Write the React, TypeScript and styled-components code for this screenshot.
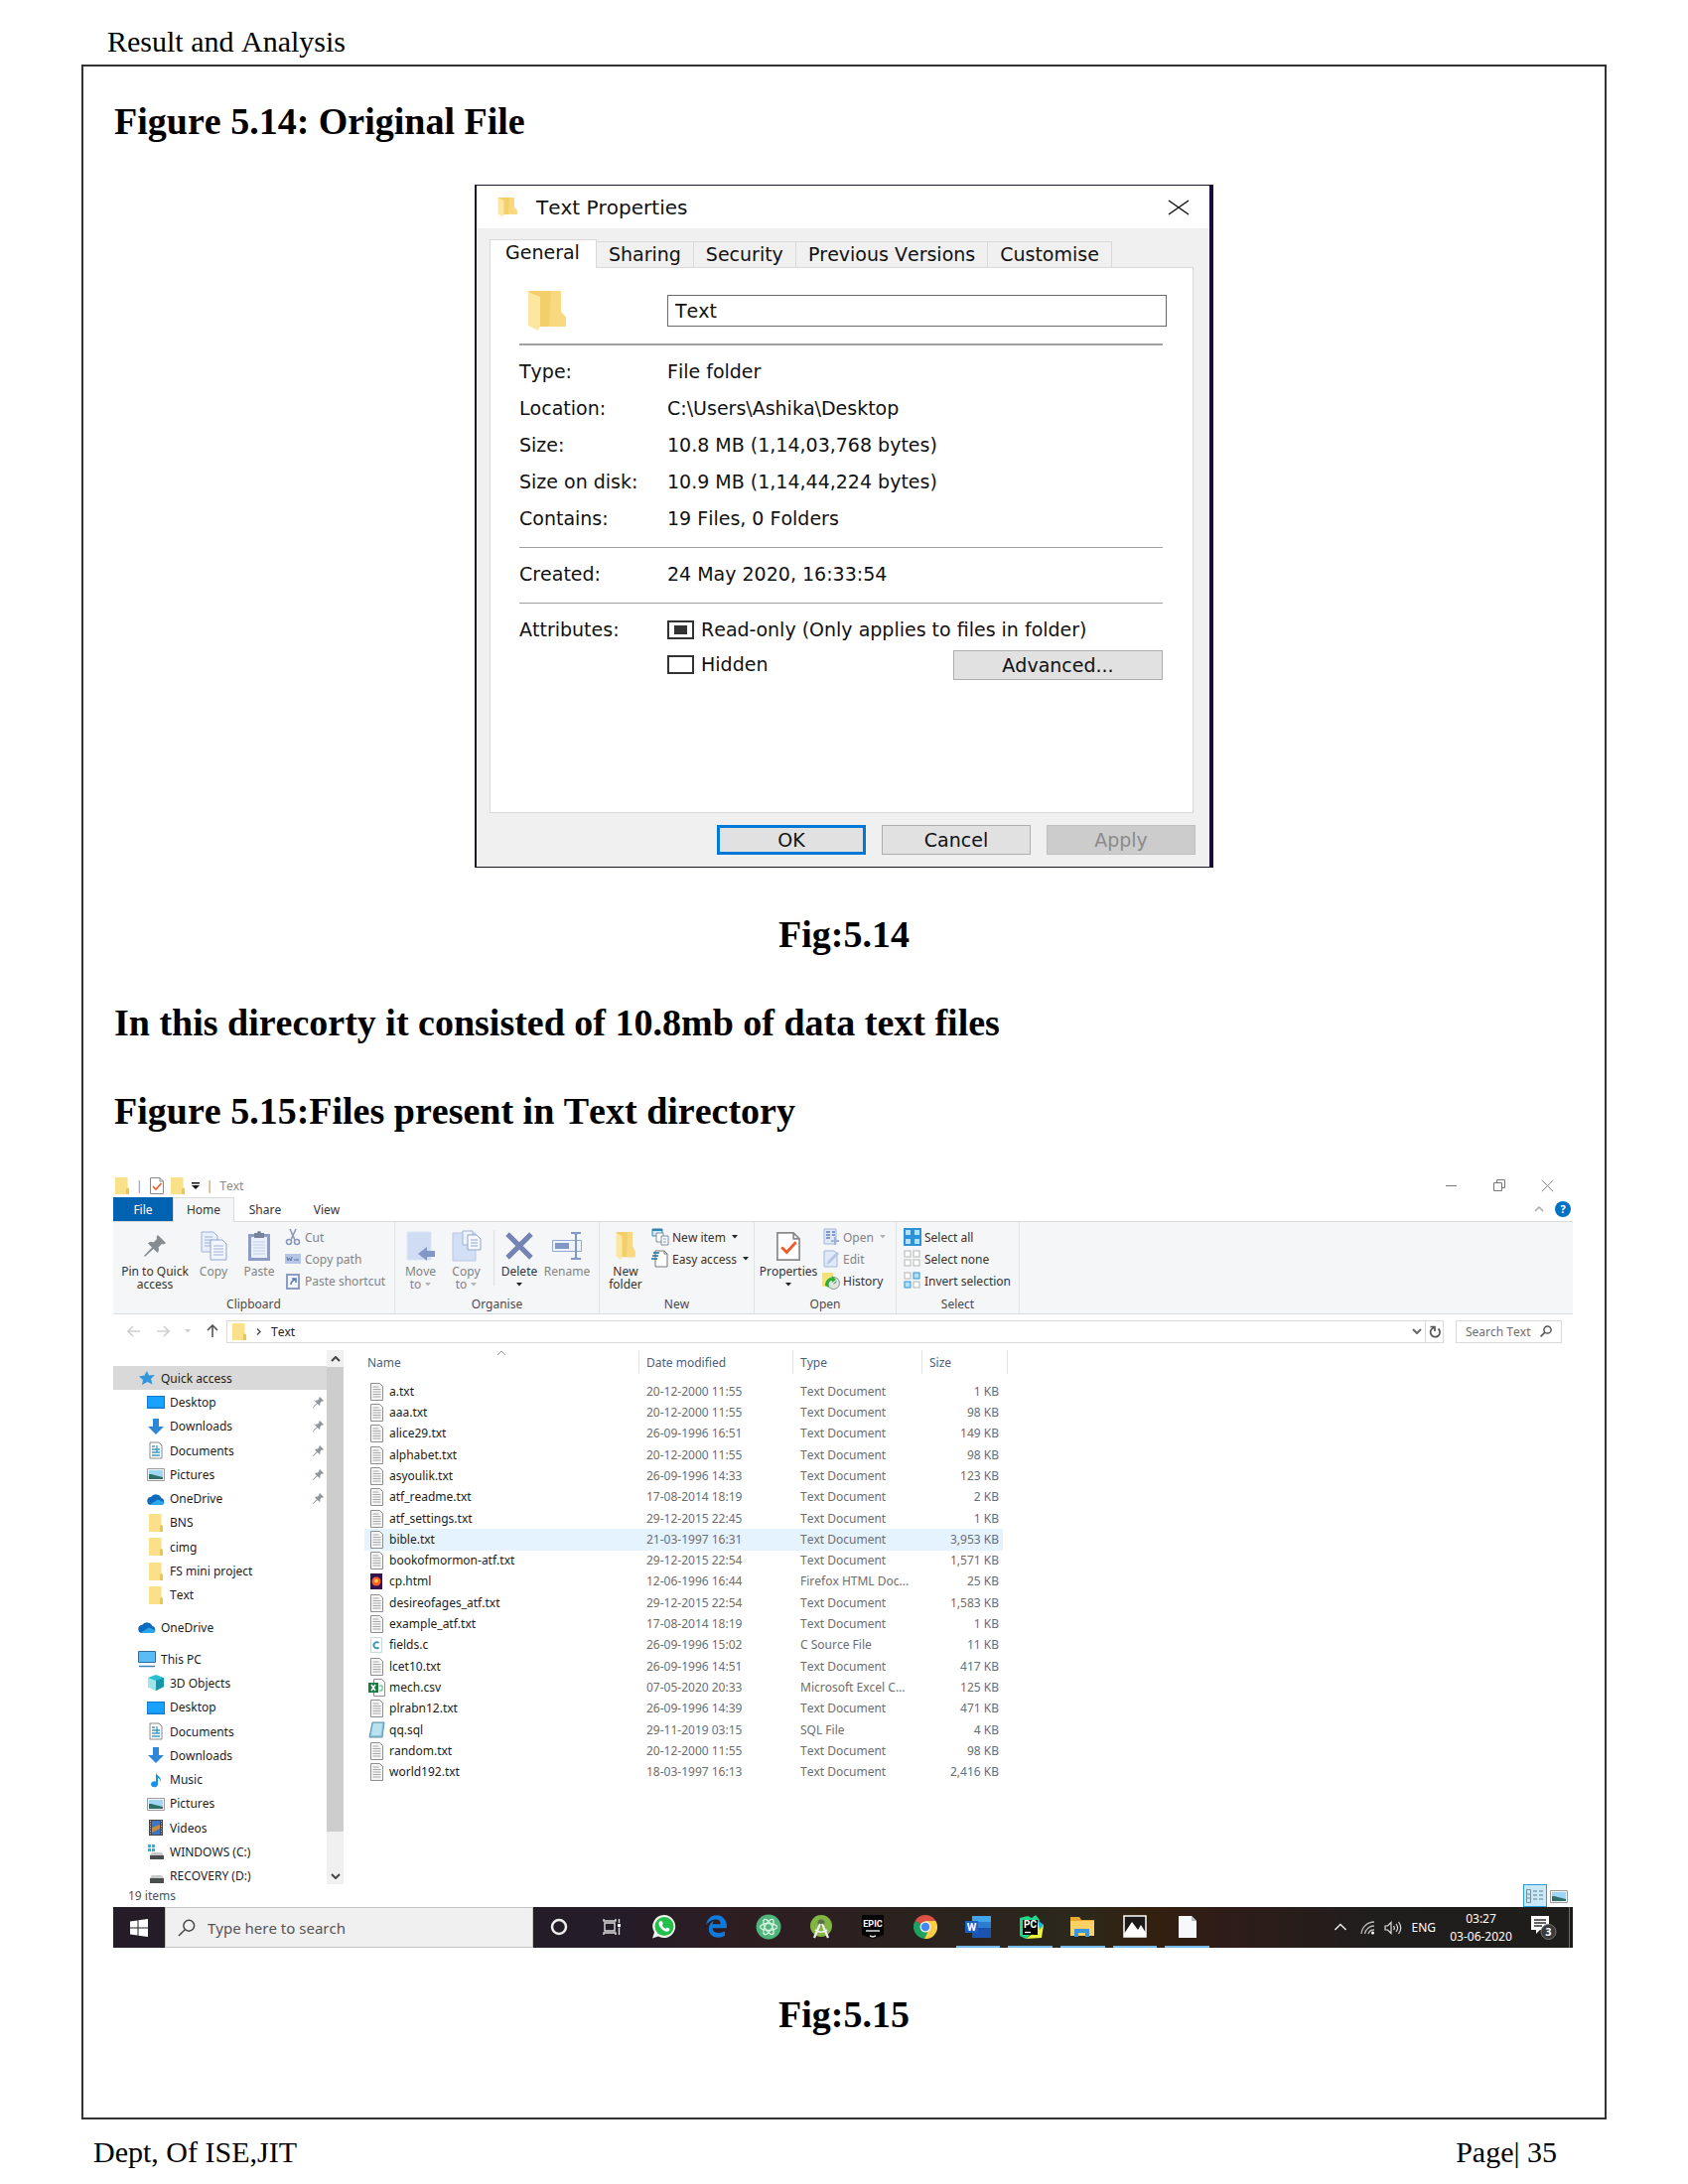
import React, { useEffect, useRef } from "react";
import styled, { createGlobalStyle, css } from "styled-components";
import { FaWhatsapp } from "react-icons/fa";
import { FaEdgeLegacy } from "react-icons/fa6";

const serif = `"Liberation Serif", "Times New Roman", serif`;
const shell = `"DejaVu Sans", Verdana, sans-serif`;
const segoe = `"Noto Sans", "Open Sans", "Segoe UI", sans-serif`;

const Global = createGlobalStyle`
  *, *::before, *::after { box-sizing: border-box; }
  body { margin: 0; background: #fff; color: #000; }
  button, input { font: inherit; color: inherit; margin: 0; }
  button { border: 0; background: none; padding: 0; }
  svg { display: block; flex: none; }
`;

/* ---------- document page ---------- */

const Page = styled.div`
  font-family: ${serif};
  font-kerning: none;
`;

const RunningHead = styled.header`
  padding: 25px 108px 6px;
`;

const RunningFoot = styled.footer`
  display: flex;
  justify-content: space-between;
  padding: 16px 132px 15px 94px;
`;

const RunningText = styled.div`
  font-size: 30px;
  line-height: 34px;
`;

const Frame = styled.main`
  margin: 0 82px;
  padding: 33px 30px 82px;
  border: 2px solid #333;
`;

const Heading = styled.h2<{ $center?: boolean }>`
  margin: 0 0 45px;
  padding-left: ${(p) => (p.$center ? 0 : 1)}px;
  font-size: 38px;
  line-height: 44px;
  font-weight: 700;
  text-align: ${(p) => (p.$center ? "center" : "left")};
  &:last-child { margin-bottom: 0; }
`;

/* ---------- properties dialog ---------- */

const Dialog = styled.section`
  width: 744px;
  max-width: 100%;
  margin: -3px auto 45px;
  border: solid #1a1526;
  border-width: 1px 4px 1px 2px;
  border-right-color: #1c0a3c;
  background: #f0f0f0;
  font-family: ${shell};
  font-size: 19px;
  color: #111;
`;

const DialogTitle = styled.div`
  display: flex;
  align-items: center;
  gap: 19px;
  height: 43px;
  padding: 0 20px 0 21px;
  background: #fff;
  font-size: 20px;
  & > button { margin-left: auto; }
`;

const DialogBody = styled.div`
  padding: 11px 14px 12px 13px;
`;

const SheetTabs = styled.div`
  display: flex;
  align-items: flex-end;
  height: 28px;
`;

const SheetTab = styled.button<{ $on?: boolean }>`
  height: 26px;
  padding: 0 12px;
  border: 1px solid #d9d9d9;
  border-width: 1px 1px 0 0;
  line-height: 25px;
  white-space: nowrap;
  ${(p) =>
    p.$on &&
    css`
      height: 29px;
      margin-bottom: -1px;
      padding: 0 16px 3px 15px;
      border-left-width: 1px;
      background: #fff;
    `}
`;

const Sheet = styled.div`
  min-height: 550px;
  margin-right: 2px;
  padding: 23px 26px 0 29px;
  border: 1px solid #d9d9d9;
  background: #fff;
`;

const NameRow = styled.div`
  display: grid;
  grid-template-columns: 149px 1fr;
  align-items: center;
  svg { margin-left: 8px; }
`;

const NameInput = styled.input`
  height: 32px;
  width: 100%;
  padding: 0 7px;
  border: 1px solid #6a6a6a;
  background: #fff;
`;

const Rule = styled.hr<{ $thick?: boolean }>`
  height: ${(p) => (p.$thick ? 2 : 1)}px;
  margin: ${(p) => (p.$thick ? 13 : 10)}px 4px 8px 0;
  border: 0;
  background: #a0a0a0;
`;

const Facts = styled.dl`
  display: grid;
  grid-template-columns: 149px 1fr;
  margin: 0;
  line-height: 37px;
  white-space: nowrap;
  dd { margin: 0; }
`;

const Attributes = styled.div`
  display: grid;
  grid-template-columns: 149px 1fr auto;
  margin-right: 4px;
  line-height: 37px;
  white-space: nowrap;
`;

const Check = styled.label<{ $wide?: boolean }>`
  display: flex;
  align-items: center;
  gap: 7px;
  grid-column: ${(p) => (p.$wide ? "2 / 4" : "2")};
  height: ${(p) => (p.$wide ? 37 : 32)}px;
  input {
    appearance: none;
    width: 27px;
    height: 19px;
    padding: 3px 5px;
    border: 2px solid #333;
    background: #fff;
  }
  input:indeterminate {
    background: #333 content-box;
  }
`;

const PushButton = styled.button<{ $primary?: boolean; $wide?: boolean }>`
  width: ${(p) => (p.$wide ? 211 : 150)}px;
  height: 30px;
  border: ${(p) => (p.$primary ? "3px solid #0078d7" : "1px solid #adadad")};
  background: #e1e1e1;
  line-height: 24px;
  align-self: end;
  &:disabled { background: #ccc; border-color: #bfbfbf; color: #8b8b8b; }
`;

const Actions = styled.div`
  display: flex;
  justify-content: flex-end;
  gap: 16px;
  padding-top: 12px;
`;

/* ---------- explorer ---------- */

const Explorer = styled.section`
  margin: -4px 2px 45px 0;
  background: #fff;
  font-family: ${segoe};
  font-size: 12px;
  color: #222;
`;

const TitleBar = styled.div`
  display: flex;
  align-items: center;
  height: 24px;
  padding: 0 19px 0 2px;
  color: #8a8a8a;
`;

const QuickTools = styled.div`
  display: flex;
  align-items: center;
  gap: 7px;
`;

const WindowButtons = styled.div`
  display: flex;
  gap: 36px;
  margin-left: auto;
`;

const RibbonTabs = styled.nav`
  display: flex;
  height: 24px;
`;

const RibbonTab = styled.button<{ $kind?: "file" | "on" }>`
  width: 62px;
  padding-bottom: 1px;
  border: 1px solid transparent;
  border-bottom: 0;
  color: #333;
  ${(p) =>
    p.$kind === "file" &&
    css`
      width: 60px;
      background: #0063b1;
      color: #fff;
    `}
  ${(p) =>
    p.$kind === "on" &&
    css`
      margin-bottom: -1px;
      padding-bottom: 2px;
      background: #f5f6f7;
      border-color: #dadbdc;
    `}
`;

const RibbonExtras = styled.div`
  display: flex;
  align-items: center;
  gap: 11px;
  margin-left: auto;
  padding-right: 2px;
`;

const Help = styled.button`
  width: 16px;
  height: 16px;
  border-radius: 50%;
  background: #0072c6;
  color: #fff;
  font-size: 11px;
  font-weight: 700;
  line-height: 16px;
`;

const Ribbon = styled.div`
  display: flex;
  height: 94px;
  border: solid #dadbdc;
  border-width: 1px 0;
  background: #f5f6f7;
`;

const Group = styled.div<{ $width: number }>`
  display: flex;
  flex-direction: column;
  width: ${(p) => p.$width}px;
  border-right: 1px solid #e2e3e4;
`;

const GroupItems = styled.div<{ $pad?: number }>`
  display: flex;
  flex: 1;
  padding-left: ${(p) => p.$pad ?? 0}px;
`;

const GroupName = styled.div`
  padding-bottom: 1px;
  line-height: 16px;
  text-align: center;
  color: #4a4a4a;
`;

const Big = styled.button<{ $width: number; $off?: boolean }>`
  display: flex;
  flex-direction: column;
  align-items: center;
  gap: 3px;
  width: ${(p) => p.$width}px;
  padding-top: 8px;
  line-height: 13px;
  white-space: nowrap;
  color: ${(p) => (p.$off ? "#838383" : "#333")};
`;

const IconBox = styled.span`
  display: flex;
  align-items: center;
  justify-content: center;
  height: 32px;
`;

const Caption = styled.span`
  display: flex;
  flex-direction: column;
  align-items: center;
`;

const WithArrow = styled.span`
  display: flex;
  align-items: center;
  gap: 4px;
  min-height: 13px;
`;

const SmallColumn = styled.div`
  display: flex;
  flex-direction: column;
  padding-top: 4px;
`;

const Small = styled.button<{ $off?: boolean }>`
  display: flex;
  align-items: center;
  gap: 3px;
  height: 22px;
  white-space: nowrap;
  color: ${(p) => (p.$off ? "#838383" : "#333")};
  & > svg:last-child:not(:first-child) { margin-left: 3px; }
`;

const Split = styled.span`
  width: 1px;
  height: 56px;
  margin: 8px 0 0 7px;
  background: #dcdddf;
`;

const AddressRow = styled.div`
  display: flex;
  align-items: center;
  height: 36px;
  padding: 0 11px 2px 14px;
`;

const NavButtons = styled.div`
  display: flex;
  align-items: center;
  gap: 15px;
  width: 100px;
`;

const AddressBox = styled.div`
  display: flex;
  align-items: center;
  gap: 10px;
  flex: 1;
  height: 23px;
  padding-left: 5px;
  border: 1px solid #d9d9d9;
`;

const Crumb = styled.button`
  margin-right: auto;
`;

const Refresh = styled.button`
  display: flex;
  align-items: center;
  justify-content: center;
  width: 18px;
  height: 21px;
  margin-left: -7px;
  border-left: 1px solid #d9d9d9;
`;

const SearchBox = styled.label`
  display: flex;
  align-items: center;
  width: 107px;
  height: 23px;
  margin-left: 12px;
  padding: 0 9px;
  border: 1px solid #d9d9d9;
  input {
    flex: 1;
    min-width: 0;
    padding: 0;
    border: 0;
    background: none;
  }
  input::placeholder { color: #6d6d6d; opacity: 1; }
`;

const Body = styled.div`
  display: flex;
  align-items: stretch;
`;

const Tree = styled.nav`
  display: flex;
  flex-direction: column;
  gap: 8px;
  width: 215px;
  height: 538px;
  padding-top: 16px;
  overflow: hidden;
  color: #1c1c1c;
`;

const Branch = styled.div<{ $height: number }>`
  display: grid;
  grid-auto-rows: 1fr;
  flex: none;
  height: ${(p) => p.$height}px;
`;

const Node = styled.a<{ $child?: boolean; $on?: boolean }>`
  display: flex;
  align-items: center;
  gap: 5px;
  padding: 0 3px 0 ${(p) => (p.$child ? 34 : 25)}px;
  color: inherit;
  text-decoration: none;
  background: ${(p) => (p.$on ? "#d9d9d9" : "none")};
  & > svg:last-child:not(:first-child) { margin-left: auto; }
`;

const ScrollBar = styled.div`
  display: flex;
  flex-direction: column;
  width: 17px;
  background: #f0f0f0;
  button { display: flex; align-items: center; justify-content: center; height: 17px; }
`;

const Thumb = styled.div`
  height: 468px;
  margin-bottom: auto;
  background: #cdcdcd;
`;

const Files = styled.table`
  width: 648px;
  height: 436px;
  margin-left: 21px;
  border-collapse: separate;
  border-spacing: 0;
  table-layout: fixed;
  line-height: 16px;
  color: #6d6d6d;
  th, td {
    padding: 0 0 0 7px;
    font-weight: 400;
    text-align: left;
    white-space: nowrap;
    overflow: hidden;
    text-overflow: ellipsis;
  }
  td:first-child { padding-left: 4px; color: #1c1c1c; }
  td:last-child {
    padding: 0 4px 0 0;
    border-right: 5px solid transparent;
    background-clip: padding-box;
    text-align: right;
  }
`;

const Column = styled.col<{ $width?: number }>`
  width: ${(p) => (p.$width ? `${p.$width}px` : "auto")};
`;

const HeadRow = styled.tr`
  height: 31px;
  color: #4c607a;
  th { padding: 0 0 7px; }
`;

const HeadCell = styled.span<{ $first?: boolean }>`
  display: flex;
  align-items: center;
  gap: 96px;
  height: 24px;
  padding: 2px 0 0 ${(p) => (p.$first ? 3 : 7)}px;
  border-right: 1px solid #e2e2e2;
  svg { margin-bottom: 21px; }
`;

const FileRow = styled.tr<{ $on?: boolean }>`
  td { background-color: ${(p) => (p.$on ? "#e5f3ff" : "transparent")}; }
`;

const FileName = styled.span`
  display: flex;
  align-items: center;
  gap: 3px;
`;

const Status = styled.div`
  display: flex;
  align-items: center;
  height: 23px;
  padding: 0 5px 0 15px;
  color: #3c5670;
`;

const Views = styled.div`
  display: flex;
  align-items: center;
  gap: 3px;
  margin-left: auto;
`;

const ViewOn = styled.button`
  display: flex;
  align-items: center;
  justify-content: center;
  width: 24px;
  height: 23px;
  border: 1px solid #26a0da;
  background: #cbe8f6;
`;

/* ---------- taskbar ---------- */

const Taskbar = styled.div`
  display: flex;
  height: 41px;
  color: #fff;
  background: linear-gradient(90deg, #241c27 0%, #241c27 35%, #2e1d22 42%, #2a221e 55%, #2c281c 66%, #33200f 71%, #2f1c18 76%, #201e1d 86%, #1f1d1a 100%);
`;

const Start = styled.button`
  display: flex;
  align-items: center;
  justify-content: center;
  width: 52px;
`;

const TaskSearch = styled.label`
  display: flex;
  align-items: center;
  gap: 12px;
  width: 371px;
  padding: 0 12px;
  border: 1px solid #c4c4c4;
  background: #f0f0f0;
  font-size: 15px;
  color: #444;
  input {
    flex: 1;
    min-width: 0;
    padding: 0;
    border: 0;
    background: none;
  }
  input::placeholder { color: #555; opacity: 1; }
`;

const Apps = styled.div`
  display: grid;
  grid-template-columns: repeat(13, 1fr);
  width: 685px;
`;

const AppButton = styled.button<{ $open?: boolean }>`
  display: flex;
  align-items: center;
  justify-content: center;
  margin: 0 4px;
  border: solid ${(p) => (p.$open ? "#76b9ed" : "transparent")};
  border-width: 0 0 2px;
`;

const Tray = styled.div`
  display: flex;
  align-items: center;
  margin-left: auto;
  padding-right: 3px;
`;

const TrayIcons = styled.div`
  display: flex;
  align-items: center;
  gap: 9px;
  & > :first-child { margin-right: 4px; }
`;

const Clock = styled.time`
  width: 63px;
  margin: 0 19px 0 14px;
  line-height: 18px;
  text-align: center;
  white-space: nowrap;
`;

const DesktopEdge = styled.span`
  width: 1px;
  align-self: stretch;
  margin-left: 11px;
  background: #6b6b6b;
`;

/* ---------- icons ---------- */

const Folder = ({ w = 14, h = 17 }: { w?: number; h?: number }) => (
  <svg width={w} height={h} viewBox="0 0 14 17" preserveAspectRatio="none">
    <path d="M0 0h12.500v10.500l1.500 1V17H0z" fill="#fbe08a" />
    <path d="M12.500 10.500l1.500 1V17h-3v-5.500z" fill="#efc552" />
  </svg>
);

const OpenFolder = ({ w, h }: { w: number; h: number }) => (
  <svg width={w} height={h} viewBox="0 0 40 40" preserveAspectRatio="none">
    <path d="M1 0h33v21l5 6v9H12z" fill="#f3cf6c" />
    <path d="M24 0h10v21l5 6v9H22z" fill="#f8d97f" />
    <path d="M1 1l12 5v29l-2 5L1 35z" fill="#fde7a0" />
  </svg>
);

const Cross = ({ s, c, w = 1 }: { s: number; c: string; w?: number }) => (
  <svg width={s} height={s} viewBox="0 0 16 16" preserveAspectRatio="none">
    <path d="M1 1l14 14M15 1L1 15" stroke={c} strokeWidth={w} fill="none" />
  </svg>
);

const Arrow = ({ c = "#222" }: { c?: string }) => (
  <svg width="6" height="4" viewBox="0 0 6 4"><path d="M0 0h6L3 3.500z" fill={c} /></svg>
);

const Chevron = ({ up, c = "#555", w = 2, s = 10 }: { up?: boolean; c?: string; w?: number; s?: number }) => (
  <svg width={s} height={s * 0.6} viewBox="0 0 10 6">
    <path d={up ? "M1 5l4-4 4 4" : "M1 1l4 4 4-4"} stroke={c} strokeWidth={w} fill="none" />
  </svg>
);

const SheetIcon = ({ children, w = 14, h = 17 }: { children?: React.ReactNode; w?: number; h?: number }) => (
  <svg width={w} height={h} viewBox="0 0 14 17">
    <path d="M.5.500h9.500l3.500 3.500v12.500H.5z" fill="#fff" stroke="#8a8a8a" />
    <path d="M10 .5V4h3.500" fill="none" stroke="#8a8a8a" />
    {children}
  </svg>
);

const CheckSheet = ({ w, h }: { w?: number; h?: number }) => (
  <SheetIcon w={w} h={h}><path d="M3 9l3 3 5.500-6" fill="none" stroke="#f05a22" strokeWidth="1.600" /></SheetIcon>
);

const Pin = ({ s, c = "#8c969c" }: { s: number; c?: string }) => (
  <svg width={s} height={s} viewBox="0 0 22 22">
    <path d="M14 0l8 8-2 1.500-2-.5-3.500 3.500c.8 2 .5 4-.8 5.500L9.500 14 1 22l-1-1 8-8.500L4 8.500C5.500 7 7.500 6.700 9.500 7.500L13 4l-.5-2z" fill={c} />
  </svg>
);

const CopyIcon = () => (
  <svg width="27" height="30" viewBox="0 0 27 30">
    <path d="M1 1h12l4 4v16H1z" fill="#e9effa" stroke="#9fb2d8" />
    <path d="M4 6h8M4 9h8M4 12h6M4 15h6" stroke="#9fb2d8" />
    <path d="M10 9h12l4 4v16H10z" fill="#f2f6fd" stroke="#8fa4cf" />
    <path d="M13 15h10M13 18h10M13 21h10M13 24h10" stroke="#9fb2d8" />
  </svg>
);

const PasteIcon = () => (
  <svg width="24" height="31" viewBox="0 0 24 31">
    <path d="M1 3h22v27H1z" fill="#8d9cc4" />
    <path d="M4 6h16v21H4z" fill="#eaf0fb" />
    <path d="M7 2h3a2 2 0 014 0h3v5H7z" fill="#77839f" />
    <path d="M6 11h12M6 14h12M6 17h12M6 20h12M6 23h12" stroke="#c3cfe8" />
  </svg>
);

const CutIcon = () => (
  <svg width="18" height="18" viewBox="0 0 18 18" fill="none" stroke="#8a9ab8" strokeWidth="1.600">
    <path d="M6 1l5 11M12 1L7 12" /><circle cx="5" cy="14" r="2.500" /><circle cx="13" cy="14" r="2.500" />
  </svg>
);

const PathIcon = () => (
  <svg width="18" height="10" viewBox="0 0 18 10">
    <path d="M1 0h16v10H1z" fill="#b5c5e6" /><path d="M3 3l1 4 1.500-3L7 7l1-4M10 6h5" stroke="#5d76a8" fill="none" />
  </svg>
);

const ShortcutIcon = () => (
  <svg width="18" height="17" viewBox="0 0 18 17">
    <path d="M2 1h14v16H2z" fill="#8d9cc4" /><path d="M4 3h10v12H4z" fill="#f2f6fd" />
    <path d="M7 12c0-3 1-4 4-5M8 6h4v4" stroke="#5a78b4" strokeWidth="1.500" fill="none" />
  </svg>
);

const MoveIcon = () => (
  <svg width="30" height="30" viewBox="0 0 30 30">
    <path d="M1 1h24v28H1z" fill="#cfdcf3" stroke="#dbe5f6" /><path d="M29 20v6h-8v4l-9-7 9-7v4z" fill="#8197c6" />
  </svg>
);

const CopyToIcon = () => (
  <svg width="30" height="32" viewBox="0 0 30 32">
    <path d="M1 3h23v28H1z" fill="#d3dff4" stroke="#b9c9e8" />
    <path d="M11 1h10v14H11z" fill="#edf2fb" stroke="#9fb2d8" />
    <path d="M16 5h9l4 4v11H16z" fill="#f5f8fe" stroke="#8fa4cf" />
    <path d="M19 10h7M19 13h7M19 16h7" stroke="#8fa4cf" />
  </svg>
);

const DeleteIcon = () => (
  <svg width="28" height="28" viewBox="0 0 27 27"><path d="M2 2l23 23M25 2L2 25" stroke="#7485b4" strokeWidth="5" /></svg>
);

const RenameIcon = () => (
  <svg width="30" height="28" viewBox="0 0 30 28">
    <path d="M.5 8.500h29v11H.5z" fill="#edf2fb" stroke="#93a7d2" /><path d="M3 11h14v6H3z" fill="#8197c6" />
    <path d="M19 1h4l1 2 1-2h4M24 2v24M19 27h4l1-2 1 2h4" stroke="#8197c6" strokeWidth="2" fill="none" />
  </svg>
);

const NewItemIcon = () => (
  <svg width="18" height="18" viewBox="0 0 18 18">
    <path d="M1 1h10v7H1z" fill="#d5ecf8" stroke="#2f86b0" /><path d="M1 2h10" stroke="#2f86b0" strokeWidth="2" />
    <path d="M5 5h7v9H5z" fill="#fff" stroke="#7d8ea0" /><path d="M10 8h7v9h-7z" fill="#fff" stroke="#7d8ea0" />
    <path d="M12 11h3M12 14h3" stroke="#7d9ec0" />
  </svg>
);

const EasyIcon = () => (
  <svg width="18" height="18" viewBox="0 0 18 18">
    <path d="M4 1h9l3 3v13H4z" fill="#fff" stroke="#777" /><path d="M13 1v3h3" stroke="#777" fill="none" />
    <path d="M0 9h6M1 6h6M2 3h6" stroke="#1d6fa0" strokeWidth="1.500" />
  </svg>
);

const OpenIcon = () => (
  <svg width="18" height="18" viewBox="0 0 18 18">
    <path d="M2 1h12v15H2z" fill="#dfe8f7" stroke="#a5b6d8" /><path d="M4 4h4M4 7h4M4 10h4M10 4h3M10 7h3" stroke="#8197c6" strokeWidth="2" />
    <path d="M13 9v8M9 13h8" stroke="#9fb2d8" strokeWidth="2" />
  </svg>
);

const EditIcon = () => (
  <svg width="18" height="18" viewBox="0 0 18 18">
    <path d="M2 1h10l3 3v13H2z" fill="#dfe9f8" stroke="#a5b6d8" /><path d="M4 15l2-4 9-9 2 2-9 9z" fill="#b5c5e6" />
  </svg>
);

const HistoryIcon = () => (
  <svg width="18" height="18" viewBox="0 0 18 18">
    <path d="M0 1h11v14H0z" fill="#f3e27a" /><circle cx="11.500" cy="11.500" r="6" fill="#dfe5e0" stroke="#8b948d" />
    <path d="M3 14c0-5 3-8 7-8v-2l4 4-4 3V9c-3 0-4 3-3 7z" fill="#2fae3b" /><path d="M11.500 12l3-2" stroke="#666" />
  </svg>
);

const Squares = ({ mode }: { mode: "all" | "none" | "invert" }) => {
  const on = { fill: "#b5def7", stroke: "#2b93d8" };
  const off = { fill: "#fff", stroke: "#b4b4b4" };
  const pick = (i: number) => (mode === "all" || (mode === "invert" && (i === 1 || i === 2)) ? on : off);
  const size = mode === "all" ? 7 : 6;
  return (
    <svg width="18" height="18" viewBox="0 0 18 18">
      {[[1, 1], [10, 1], [1, 10], [10, 10]].map(([x, y], i) => (
        <rect key={i} x={x} y={y} width={size} height={size} strokeWidth={mode === "all" ? 2 : 1} {...pick(i)} />
      ))}
    </svg>
  );
};

const NavArrow = ({ d, c }: { d: string; c: string }) => (
  <svg width="14" height="14" viewBox="0 0 14 14"><path d={d} stroke={c} strokeWidth="1.600" fill="none" /></svg>
);

const Magnifier = ({ s, c, w }: { s: number; c: string; w: number }) => (
  <svg width={s} height={s} viewBox="0 0 16 16" fill="none" stroke={c} strokeWidth={w}>
    <circle cx="10" cy="6" r="4.800" /><path d="M6.500 9.500L.8 15.200" />
  </svg>
);

const treeArt: Record<string, React.ReactNode> = {
  star: <path d="M9 2l2 4.500 6-.5-4 4 1.500 5.500L9.500 13 4 16l1-5-4-3.500 5.500-1z" fill="#2f97de" />,
  desktop: <><path d="M0 3h18v13H0z" fill="#1279d0" /><path d="M1 4h16v10.500H1z" fill="#17a2ff" /></>,
  down: <path d="M6 1h6v8h5l-8 8-8-8h5z" fill="#2f87d8" />,
  doc: <><path d="M3 1h9l3 3v13H3z" fill="#fff" stroke="#8a8a8a" /><path d="M5 5h3M5 8h8M5 11h8M5 14h8M10 4v7" stroke="#3b9ac4" strokeWidth="1.300" /></>,
  pic: <><path d="M.5 3.500h17v12H.5z" fill="#f4f4f4" stroke="#9c9c9c" /><path d="M2 5h14v9H2z" fill="#9fd6f5" /><path d="M2 9c5 0 8 2 14 3v2H2z" fill="#2f6f68" /></>,
  cloud: <><path d="M4.500 15a4 4 0 01-.5-8 6 6 0 0110.500 1A3.600 3.600 0 0114.500 15z" fill="#0f6cbd" /><path d="M3 14.500l8-5 6.500 3c0 1.500-1 2.500-3 2.500h-10z" fill="#28a8ea" /></>,
  pc: <><path d="M.5 1.500h17v11H.5z" fill="#5bbcf5" stroke="#2e6f9e" /><path d="M1 16.500h16" stroke="#3a82b3" strokeWidth="1.500" /></>,
  cube: <><path d="M1 4l8-3 8 3v9l-8 4-8-4z" fill="#2bc0cf" /><path d="M1 4l8 3v10l-8-4z" fill="#9fe5ec" /><path d="M9 7l8-3v9l-8 4z" fill="#1298aa" /></>,
  music: <path d="M9 1c0 4 6 4 5 10-1-3-2-4-3-4v6.500a3.500 3 0 11-2-3z" fill="#1592ea" />,
  video: <><path d="M2 1h14v16H2z" fill="#454545" /><path d="M5 2h8v14H5z" fill="#3f74c8" /><path d="M5 9l8-3v4l-8 4z" fill="#c98b3a" /><path d="M3.500 2v14M14.500 2v14" stroke="#ccc" strokeDasharray="1 1.500" /></>,
  cdrive: <><path d="M1 1h3v3H1zM5 1h3v3H5zM1 5h3v3H1zM5 5h3v3H5z" fill="#22b5e8" /><path d="M5 9h10l2 3H3z" fill="#c9c9c9" /><path d="M3 12h14v4H3z" fill="#4a4f4d" /></>,
  ddrive: <><path d="M5 8h10l2 3H3z" fill="#c9c9c9" /><path d="M3 11h14v5H3z" fill="#4a4f4d" /></>,
  folder: <><path d="M2 0h12.500v11l1.500 1v6H2z" fill="#fbe08a" /><path d="M14.500 11l1.500 1v6h-3v-6z" fill="#efc552" /></>,
};

const TreeIcon = ({ name }: { name: string }) => (
  <svg width="18" height="18" viewBox="0 0 18 18">{treeArt[name]}</svg>
);

const fileArt: Record<string, React.ReactNode> = {
  txt: <><path d="M2.500.500h9l3 3v14h-12z" fill="#f5f5f5" stroke="#8f8f8f" /><path d="M4.500 4h6M4.500 6.500h8M4.500 9h8M4.500 11.500h8M4.500 14h8" stroke="#a9a9a9" /></>,
  html: <><path d="M2 1h12v16H2z" fill="#33134f" /><circle cx="8" cy="9" r="4.500" fill="#ff5a2a" /><circle cx="8" cy="8.500" r="2" fill="#ffc93a" /></>,
  c: <><path d="M2.500 1.500h11v15h-11z" fill="#fff" stroke="#c9d7de" /><path d="M10.500 7a3 3 0 100 4.500" stroke="#3c93b8" strokeWidth="1.800" fill="none" /></>,
  csv: <><path d="M5.500.500h8l3 3v14h-11z" fill="#fff" stroke="#8f8f8f" /><path d="M0 4h10v10H0z" fill="#1a7a43" /><path d="M3 6l4 6M7 6l-4 6" stroke="#fff" strokeWidth="1.500" /><path d="M11 7h3v5h-3" stroke="#4caf6e" fill="none" /></>,
  sql: <><path d="M4 1h12l-2 15H1z" fill="#8cc6dd" stroke="#5f93aa" /><path d="M5 2h9l-1.500 12H3z" fill="#b8e2f0" /></>,
};

const FileIcon = ({ name }: { name: string }) => (
  <svg width="18" height="18" viewBox="0 0 18 18">{fileArt[name]}</svg>
);

const WhatsAppIcon = () => (
  <svg width="24" height="24" viewBox="0 0 24 24">
    <path d="M12 0a11.500 11.500 0 11-6 21.500L0 23.500l2-6A11.500 11.500 0 0112 0z" fill="#eef5ee" />
    <circle cx="12" cy="11.500" r="9.500" fill="#25c04b" />
    <path d="M8 6l2 .5.800 2.500-1 1.200c.8 1.800 2 2.800 3.700 3.600l1.200-1.300 2.600 1.200c.2 2-1 3-2.600 3C10.500 16.500 7 12 6.500 9 6.500 7.500 7 6.500 8 6z" fill="#fff" />
  </svg>
);

/* ---------- data ---------- */

const quick: [string, string, boolean][] = [
  ["desktop", "Desktop", true], ["down", "Downloads", true], ["doc", "Documents", true],
  ["pic", "Pictures", true], ["cloud", "OneDrive", true], ["folder", "BNS", false],
  ["folder", "cimg", false], ["folder", "FS mini project", false], ["folder", "Text", false],
];

const pc: [string, string][] = [
  ["cube", "3D Objects"], ["desktop", "Desktop"], ["doc", "Documents"], ["down", "Downloads"],
  ["music", "Music"], ["pic", "Pictures"], ["video", "Videos"], ["cdrive", "WINDOWS (C:)"], ["ddrive", "RECOVERY (D:)"],
];

const files: [string, string, string, string, string][] = [
  ["txt", "a.txt", "20-12-2000 11:55", "Text Document", "1 KB"],
  ["txt", "aaa.txt", "20-12-2000 11:55", "Text Document", "98 KB"],
  ["txt", "alice29.txt", "26-09-1996 16:51", "Text Document", "149 KB"],
  ["txt", "alphabet.txt", "20-12-2000 11:55", "Text Document", "98 KB"],
  ["txt", "asyoulik.txt", "26-09-1996 14:33", "Text Document", "123 KB"],
  ["txt", "atf_readme.txt", "17-08-2014 18:19", "Text Document", "2 KB"],
  ["txt", "atf_settings.txt", "29-12-2015 22:45", "Text Document", "1 KB"],
  ["txt", "bible.txt", "21-03-1997 16:31", "Text Document", "3,953 KB"],
  ["txt", "bookofmormon-atf.txt", "29-12-2015 22:54", "Text Document", "1,571 KB"],
  ["html", "cp.html", "12-06-1996 16:44", "Firefox HTML Doc...", "25 KB"],
  ["txt", "desireofages_atf.txt", "29-12-2015 22:54", "Text Document", "1,583 KB"],
  ["txt", "example_atf.txt", "17-08-2014 18:19", "Text Document", "1 KB"],
  ["c", "fields.c", "26-09-1996 15:02", "C Source File", "11 KB"],
  ["txt", "lcet10.txt", "26-09-1996 14:51", "Text Document", "417 KB"],
  ["csv", "mech.csv", "07-05-2020 20:33", "Microsoft Excel C...", "125 KB"],
  ["txt", "plrabn12.txt", "26-09-1996 14:39", "Text Document", "471 KB"],
  ["sql", "qq.sql", "29-11-2019 03:15", "SQL File", "4 KB"],
  ["txt", "random.txt", "20-12-2000 11:55", "Text Document", "98 KB"],
  ["txt", "world192.txt", "18-03-1997 16:13", "Text Document", "2,416 KB"],
];

const apps: { name: string; open?: boolean; art: React.ReactNode }[] = [
  { name: "Cortana", art: <svg width="18" height="18" viewBox="0 0 18 18"><circle cx="9" cy="9" r="7" fill="none" stroke="#eee" strokeWidth="2.500" /></svg> },
  { name: "Task view", art: (
    <svg width="18" height="16" viewBox="0 0 18 16" fill="none" stroke="#ddd">
      <path d="M2 4h10v8H2zM1 0v2h12V0M1 16v-2h12v2M16.500 0v4M16.500 8.500V16" strokeWidth="1.400" /><path d="M15 5h3v3h-3z" fill="#fff" stroke="none" />
    </svg>
  ) },
  { name: "WhatsApp", art: <WhatsAppIcon /> },
  { name: "Edge", art: <FaEdgeLegacy size={23} color="#0f7ad8" /> },
  { name: "Atom", art: (
    <svg width="26" height="26" viewBox="0 0 26 26">
      <circle cx="13" cy="13" r="12.500" fill="#4fb57c" />
      <g fill="none" stroke="#d6f3e1" strokeWidth="1.300">
        <ellipse cx="13" cy="13" rx="8.500" ry="3.500" /><ellipse cx="13" cy="13" rx="8.500" ry="3.500" transform="rotate(60 13 13)" /><ellipse cx="13" cy="13" rx="8.500" ry="3.500" transform="rotate(120 13 13)" />
      </g>
    </svg>
  ) },
  { name: "Android Studio", art: (
    <svg width="24" height="24" viewBox="0 0 24 24">
      <circle cx="12" cy="11" r="11" fill="#82b541" /><circle cx="12" cy="8" r="3.500" fill="#56704a" />
      <path d="M11 9L5 23M13 9l6 14" stroke="#f1f1f1" strokeWidth="2.200" /><path d="M6 15c4 3 8 3 12 0" stroke="#f1f1f1" strokeWidth="1.600" fill="none" />
    </svg>
  ) },
  { name: "Epic Games", art: (
    <svg width="22" height="24" viewBox="0 0 22 24">
      <path d="M0 0h22v20l-11 4-11-4z" fill="#050505" />
      <text x="11" y="12" fontSize="9" fontWeight="700" fontFamily="Roboto, sans-serif" textAnchor="middle" fill="#fff">EPIC</text>
      <path d="M4 16h14M8 21l3 1 3-1" stroke="#ddd" strokeWidth="1.500" fill="none" />
    </svg>
  ) },
  { name: "Chrome", art: (
    <svg width="24" height="24" viewBox="0 0 24 24">
      <path d="M12 12L1.600 6a12 12 0 0120.800 0z" fill="#de5246" /><path d="M12 12L1.600 6A12 12 0 0011 24l5-9z" fill="#1da260" />
      <path d="M12 12h5L11 24A12 12 0 0022.400 6H12z" fill="#ffce44" /><circle cx="12" cy="12" r="5.500" fill="#f1f1f1" /><circle cx="12" cy="12" r="4.200" fill="#4587f3" />
    </svg>
  ) },
  { name: "Word", open: true, art: (
    <svg width="26" height="22" viewBox="0 0 26 22">
      <path d="M7 0h19v7H7z" fill="#41a5ee" /><path d="M7 6h19v6H7z" fill="#2b7cd3" /><path d="M7 12h19v10H7z" fill="#1a53b0" />
      <path d="M0 5h13v12H0z" fill="#1b5fc0" />
      <text x="6.500" y="15" fontSize="11" fontWeight="700" fontFamily="Roboto, sans-serif" textAnchor="middle" fill="#fff">W</text>
    </svg>
  ) },
  { name: "PyCharm", open: true, art: (
    <svg width="26" height="24" viewBox="0 0 26 24">
      <path d="M2 3l8-2 4 2 4-3 4 5-4 10-10 9-6-3z" fill="#21d789" /><path d="M18 6l8 4-2 13-16 1 8-6z" fill="#e9f23c" /><path d="M20 5l6 5-4 5z" fill="#14b8e8" />
      <path d="M5 5h15v15H5z" fill="#060606" />
      <text x="12.500" y="13" fontSize="10" fontWeight="700" fontFamily="Roboto, sans-serif" textAnchor="middle" fill="#fff">PC</text>
      <path d="M7 17.500h6" stroke="#fff" strokeWidth="1.300" />
    </svg>
  ) },
  { name: "File Explorer", open: true, art: (
    <svg width="24" height="20" viewBox="0 0 24 20">
      <path d="M0 0h9l2 3h13v16H0z" fill="#e8a92f" /><path d="M0 4h24v15H0z" fill="#fbd065" /><path d="M4 20v-8h15v8h-4v-4H8v4z" fill="#3a96dd" />
    </svg>
  ) },
  { name: "Photos", open: true, art: (
    <svg width="24" height="23" viewBox="0 0 24 23">
      <path d="M1 1h22v21H1z" fill="#1b1a19" stroke="#fff" strokeWidth="1.500" /><path d="M1 19L9 7l6 8 3-5 5 8v4H1z" fill="#fff" />
    </svg>
  ) },
  { name: "Document", open: true, art: (
    <svg width="18" height="22" viewBox="0 0 18 22"><path d="M0 0h13l5 5v17H0z" fill="#f6f8fc" /><path d="M13 0v5h5z" fill="#b9bec6" /></svg>
  ) },
];

/* ---------- sections ---------- */

function PropertiesDialog() {
  const readOnly = useRef<HTMLInputElement>(null);
  useEffect(() => {
    if (readOnly.current) readOnly.current.indeterminate = true;
  }, []);
  return (
    <Dialog>
      <DialogTitle>
        <OpenFolder w={20} h={19} />
        <span>Text Properties</span>
        <button aria-label="Close">
          <svg width="22" height="16" viewBox="0 0 22 16"><path d="M1 1l20 14M21 1L1 15" stroke="#111" strokeWidth="1.500" /></svg>
        </button>
      </DialogTitle>
      <DialogBody>
        <SheetTabs>
          <SheetTab $on>General</SheetTab>
          <SheetTab>Sharing</SheetTab>
          <SheetTab>Security</SheetTab>
          <SheetTab>Previous Versions</SheetTab>
          <SheetTab>Customise</SheetTab>
        </SheetTabs>
        <Sheet>
          <NameRow>
            <OpenFolder w={40} h={40} />
            <NameInput aria-label="Name" defaultValue="Text" />
          </NameRow>
          <Rule $thick />
          <Facts>
            <dt>Type:</dt><dd>File folder</dd>
            <dt>Location:</dt><dd>C:\Users\Ashika\Desktop</dd>
            <dt>Size:</dt><dd>10.8 MB (1,14,03,768 bytes)</dd>
            <dt>Size on disk:</dt><dd>10.9 MB (1,14,44,224 bytes)</dd>
            <dt>Contains:</dt><dd>19 Files, 0 Folders</dd>
          </Facts>
          <Rule />
          <Facts><dt>Created:</dt><dd>24 May 2020, 16:33:54</dd></Facts>
          <Rule />
          <Attributes>
            <span>Attributes:</span>
            <Check $wide><input type="checkbox" ref={readOnly} />Read-only (Only applies to files in folder)</Check>
            <Check><input type="checkbox" />Hidden</Check>
            <PushButton $wide>Advanced...</PushButton>
          </Attributes>
        </Sheet>
        <Actions>
          <PushButton $primary>OK</PushButton>
          <PushButton>Cancel</PushButton>
          <PushButton disabled>Apply</PushButton>
        </Actions>
      </DialogBody>
    </Dialog>
  );
}

function RibbonBar() {
  return (
    <Ribbon>
      <Group $width={284}>
        <GroupItems $pad={4}>
          <Big $width={76}><IconBox><Pin s={22} c="#858d92" /></IconBox><Caption><span>Pin to Quick</span><span>access</span></Caption></Big>
          <Big $width={42} $off><IconBox><CopyIcon /></IconBox>Copy</Big>
          <Big $width={50} $off><IconBox><PasteIcon /></IconBox>Paste</Big>
          <SmallColumn>
            <Small $off><CutIcon />Cut</Small>
            <Small $off><PathIcon />Copy path</Small>
            <Small $off><ShortcutIcon />Paste shortcut</Small>
          </SmallColumn>
        </GroupItems>
        <GroupName>Clipboard</GroupName>
      </Group>
      <Group $width={206}>
        <GroupItems>
          <Big $width={51} $off><IconBox><MoveIcon /></IconBox><Caption><span>Move</span><WithArrow>to<Arrow c="#b5b5b5" /></WithArrow></Caption></Big>
          <Big $width={41} $off><IconBox><CopyToIcon /></IconBox><Caption><span>Copy</span><WithArrow>to<Arrow c="#b5b5b5" /></WithArrow></Caption></Big>
          <Split />
          <Big $width={50}><IconBox><DeleteIcon /></IconBox><Caption><span>Delete</span><WithArrow><Arrow /></WithArrow></Caption></Big>
          <Big $width={46} $off><IconBox><RenameIcon /></IconBox>Rename</Big>
        </GroupItems>
        <GroupName>Organise</GroupName>
      </Group>
      <Group $width={156}>
        <GroupItems>
          <Big $width={52}><IconBox><OpenFolder w={20} h={28} /></IconBox><Caption><span>New</span><span>folder</span></Caption></Big>
          <SmallColumn>
            <Small><NewItemIcon />New item<Arrow /></Small>
            <Small><EasyIcon />Easy access<Arrow /></Small>
          </SmallColumn>
        </GroupItems>
        <GroupName>New</GroupName>
      </Group>
      <Group $width={143}>
        <GroupItems>
          <Big $width={68}><IconBox><CheckSheet w={24} h={29} /></IconBox><Caption><span>Properties</span><WithArrow><Arrow /></WithArrow></Caption></Big>
          <SmallColumn>
            <Small $off><OpenIcon />Open<Arrow c="#b5b5b5" /></Small>
            <Small $off><EditIcon />Edit</Small>
            <Small><HistoryIcon />History</Small>
          </SmallColumn>
        </GroupItems>
        <GroupName>Open</GroupName>
      </Group>
      <Group $width={124}>
        <GroupItems $pad={7}>
          <SmallColumn>
            <Small><Squares mode="all" />Select all</Small>
            <Small><Squares mode="none" />Select none</Small>
            <Small><Squares mode="invert" />Invert selection</Small>
          </SmallColumn>
        </GroupItems>
        <GroupName>Select</GroupName>
      </Group>
    </Ribbon>
  );
}

function FolderTree() {
  return (
    <Tree>
      <Branch $height={243}>
        <Node href="#" $on><TreeIcon name="star" />Quick access</Node>
        {quick.map(([icon, label, pinned]) => (
          <Node href="#" $child key={label}><TreeIcon name={icon} />{label}{pinned && <Pin s={11} />}</Node>
        ))}
      </Branch>
      <Branch $height={24}><Node href="#"><TreeIcon name="cloud" />OneDrive</Node></Branch>
      <Branch $height={243}>
        <Node href="#"><TreeIcon name="pc" />This PC</Node>
        {pc.map(([icon, label]) => (
          <Node href="#" $child key={label}><TreeIcon name={icon} />{label}</Node>
        ))}
      </Branch>
    </Tree>
  );
}

function FileTable() {
  return (
    <Files>
      <colgroup><Column $width={277} /><Column $width={155} /><Column $width={130} /><Column /></colgroup>
      <thead>
        <HeadRow>
          <th><HeadCell $first>Name<Chevron up c="#999" w={1} /></HeadCell></th>
          <th><HeadCell>Date modified</HeadCell></th>
          <th><HeadCell>Type</HeadCell></th>
          <th><HeadCell>Size</HeadCell></th>
        </HeadRow>
      </thead>
      <tbody>
        {files.map(([icon, name, date, type, size]) => (
          <FileRow key={name} $on={name === "bible.txt"}>
            <td><FileName><FileIcon name={icon} />{name}</FileName></td>
            <td>{date}</td>
            <td>{type}</td>
            <td>{size}</td>
          </FileRow>
        ))}
      </tbody>
    </Files>
  );
}

function TaskbarRow() {
  return (
    <Taskbar>
      <Start aria-label="Start">
        <svg width="18" height="18" viewBox="0 0 18 18"><path d="M0 2.500L7.500 1.500v7H0zM8.500 1.300L18 0v8.500H8.500zM0 9.500h7.500v7L0 15.500zM8.500 9.500H18V18l-9.500-1.300z" fill="#fff" /></svg>
      </Start>
      <TaskSearch>
        <Magnifier s={18} c="#444" w={1.3} />
        <input aria-label="Search" placeholder="Type here to search" />
      </TaskSearch>
      <Apps>
        {apps.map((a) => <AppButton key={a.name} aria-label={a.name} $open={a.open}>{a.art}</AppButton>)}
      </Apps>
      <Tray>
        <TrayIcons>
          <Chevron up c="#eee" w={1} s={14} />
          <svg width="15" height="15" viewBox="0 0 15 15" fill="none" stroke="#bbb" strokeWidth="1.300">
            <path d="M1 14A13 13 0 0114 2M4.500 14A9.500 9.500 0 0114 6M8 14a6 6 0 016-4" /><circle cx="12.500" cy="13" r="1.500" fill="#fff" stroke="none" />
          </svg>
          <svg width="18" height="14" viewBox="0 0 18 14" fill="none" stroke="#ddd" strokeWidth="1.200">
            <path d="M1 5h2.500L7 1.500v11L3.500 9H1zM9.500 5c1 1.500 1 3 0 4M12 3c2 2.500 2 5.500 0 8M14.500 1c3 4 3 8 0 12" />
          </svg>
          <span>ENG</span>
        </TrayIcons>
        <Clock>03:27<br />03-06-2020</Clock>
        <svg width="27" height="26" viewBox="0 0 27 26">
          <path d="M0 1h18v14H9l-4 4v-4H0z" fill="#fff" /><path d="M3 5h12M3 8h12M3 11h8" stroke="#333" strokeWidth="1.300" />
          <circle cx="17.500" cy="17" r="7.500" fill="#3a3a3a" stroke="#777" />
          <text x="17.500" y="21" fontSize="11" fontWeight="700" fontFamily="Noto Sans, sans-serif" textAnchor="middle" fill="#fff">3</text>
        </svg>
        <DesktopEdge />
      </Tray>
    </Taskbar>
  );
}

function ExplorerWindow() {
  return (
    <Explorer>
      <TitleBar>
        <QuickTools>
          <Folder />
          <span>|</span>
          <CheckSheet />
          <Folder />
          <svg width="8" height="7" viewBox="0 0 8 7"><path d="M0 0h8v1.500H0zM0 3h8L4 7z" fill="#111" /></svg>
          <span>|</span>
          <span>Text</span>
        </QuickTools>
        <WindowButtons>
          <button aria-label="Minimise"><svg width="12" height="12" viewBox="0 0 12 12"><path d="M0 6.500h11" stroke="#777" /></svg></button>
          <button aria-label="Restore"><svg width="12" height="12" viewBox="0 0 12 12"><path d="M.5 3.500h8v8h-8zM3.500 3V.500h8v8H9" fill="none" stroke="#777" /></svg></button>
          <button aria-label="Close window"><Cross s={13} c="#777" /></button>
        </WindowButtons>
      </TitleBar>
      <RibbonTabs>
        <RibbonTab $kind="file">File</RibbonTab>
        <RibbonTab $kind="on">Home</RibbonTab>
        <RibbonTab>Share</RibbonTab>
        <RibbonTab>View</RibbonTab>
        <RibbonExtras><Chevron up c="#aaa" w={1.5} /><Help>?</Help></RibbonExtras>
      </RibbonTabs>
      <RibbonBar />
      <AddressRow>
        <NavButtons>
          <NavArrow d="M13 7H1M6 2L1 7l5 5" c="#cfcfcf" />
          <NavArrow d="M1 7h12M8 2l5 5-5 5" c="#cfcfcf" />
          <Arrow c="#ccc" />
          <NavArrow d="M7 13V1M2 6l5-5 5 5" c="#555" />
        </NavButtons>
        <AddressBox>
          <Folder />
          <svg width="5" height="7" viewBox="0 0 5 7"><path d="M1 .500l3 3-3 3" fill="none" stroke="#444" strokeWidth="1.300" /></svg>
          <Crumb>Text</Crumb>
          <Chevron c="#666" />
          <Refresh aria-label="Refresh">
            <svg width="12" height="13" viewBox="0 0 12 13"><path d="M9.500 3.500A4.700 4.700 0 115 2.500M1.500 1.500h4.500V6" fill="none" stroke="#555" strokeWidth="1.700" /></svg>
          </Refresh>
        </AddressBox>
        <SearchBox>
          <input aria-label="Search Text" placeholder="Search Text" />
          <Magnifier s={12} c="#555" w={2} />
        </SearchBox>
      </AddressRow>
      <Body>
        <FolderTree />
        <ScrollBar>
          <button aria-label="Scroll up"><Chevron up c="#444" s={10} /></button>
          <Thumb />
          <button aria-label="Scroll down"><Chevron c="#444" s={10} /></button>
        </ScrollBar>
        <FileTable />
      </Body>
      <Status>
        <span>19 items</span>
        <Views>
          <ViewOn aria-label="Details view">
            <svg width="18" height="14" viewBox="0 0 18 14" fill="none"><path d="M.5.500h4v13h-4zM.5 5h4M.5 9h4" stroke="#8a8a8a" /><path d="M7 2h4M7 6h4M7 10h4M13 2h4M13 6h4M13 10h4" stroke="#5a7f94" /></svg>
          </ViewOn>
          <TreeIcon name="pic" />
        </Views>
      </Status>
      <TaskbarRow />
    </Explorer>
  );
}

export default function App() {
  return (
    <Page>
      <Global />
      <RunningHead><RunningText>Result and Analysis</RunningText></RunningHead>
      <Frame>
        <Heading>Figure 5.14: Original File</Heading>
        <PropertiesDialog />
        <Heading $center>Fig:5.14</Heading>
        <Heading>In this direcorty it consisted of 10.8mb of data text files</Heading>
        <Heading>Figure 5.15:Files present in Text directory</Heading>
        <ExplorerWindow />
        <Heading $center>Fig:5.15</Heading>
      </Frame>
      <RunningFoot>
        <RunningText>Dept, Of ISE,JIT</RunningText>
        <RunningText>Page| 35</RunningText>
      </RunningFoot>
    </Page>
  );
}
